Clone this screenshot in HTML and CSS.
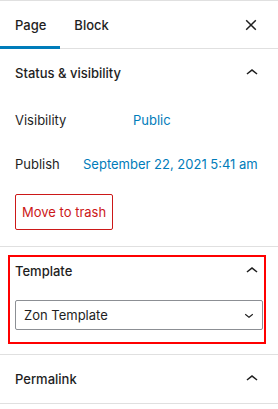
FILE: index.html
```html
<!DOCTYPE html>
<html lang="en">
<head>
    <meta charset="UTF-8">
    <meta name="viewport" content="width=device-width, initial-scale=1.0">
    <title>Page Settings</title>
    <link rel="stylesheet" href="styles.css">
</head>

<body>

<div class="sidebar">
  <div class="tabs">
    <button class="tab is-active">Page</button>
    <button class="tab">Block</button>
    <button class="close" aria-label="Close settings">
      <svg width="12" height="12" viewBox="0 0 12 12"><path d="M1.2 1.2l9.6 9.6M10.8 1.2l-9.6 9.6" stroke="#1e1e1e" stroke-width="1.5" fill="none"/></svg>
    </button>
  </div>

  <div class="panel">
    <button class="panel-toggle">Status &amp; visibility
      <svg class="arrow" width="24" height="24" viewBox="0 0 24 24"><path d="M6.5 12.4L12 8l5.5 4.4-.9 1.2L12 10l-4.6 3.6-.9-1.2z"/></svg>
    </button>
    <div class="panel-body">
      <div class="row row-visibility">
        <span class="label">Visibility</span>
        <span class="value">Public</span>
      </div>
      <div class="row row-publish">
        <span class="label">Publish</span>
        <span class="value">September 22, 2021 5:41 am</span>
      </div>
      <button class="trash">Move to trash</button>
    </div>
  </div>

  <div class="panel panel-template">
    <button class="panel-toggle">Template
      <svg class="arrow" width="24" height="24" viewBox="0 0 24 24"><path d="M6.5 12.4L12 8l5.5 4.4-.9 1.2L12 10l-4.6 3.6-.9-1.2z"/></svg>
    </button>
    <div class="panel-body">
      <div class="select">
        <span>Zon Template</span>
        <svg width="18" height="18" viewBox="0 0 24 24"><path d="M17.5 11.6L12 16l-5.5-4.4.9-1.2L12 14l4.6-3.7.9 1.3z"/></svg>
      </div>
    </div>
    <div class="highlight"></div>
  </div>

  <div class="panel">
    <button class="panel-toggle">Permalink
      <svg class="arrow" width="24" height="24" viewBox="0 0 24 24"><path d="M6.5 12.4L12 8l5.5 4.4-.9 1.2L12 10l-4.6 3.6-.9-1.2z"/></svg>
    </button>
  </div>
</div>

</body>
</html>
```

FILE: styles.css
```css
body {
    font-family: Inter, "Noto Sans", sans-serif;
    font-size: 13px;
    color: #1e1e1e;
    background-color: #fff;
    margin: 0;
    padding: 0;
}

button {
    font-family: inherit;
    font-size: inherit;
    color: inherit;
    background: none;
    border: none;
    padding: 0;
    cursor: pointer;
}

.sidebar {
    border-top: 1px solid #e0e0e0;
}

.tabs {
    display: flex;
    align-items: stretch;
    height: 47px;
    border-bottom: 1px solid #e0e0e0;
}

.tab {
    height: 48px;
    padding: 0 14px;
    font-weight: 500;
}

.tab.is-active {
    padding: 0 14px 0 15px;
    box-shadow: inset 0 -3px 0 0 #007cba;
}

.close {
    margin-left: auto;
    width: 36px;
    margin-right: 9px;
    display: flex;
    align-items: center;
    justify-content: center;
}

.panel {
    border-bottom: 1px solid #e0e0e0;
}

.panel-toggle {
    display: flex;
    align-items: center;
    justify-content: space-between;
    width: 100%;
    height: 48px;
    padding: 0 15px;
    font-weight: 500;
    text-align: left;
}

.arrow {
    fill: #1e1e1e;
    margin-right: -1px;
}

.panel-body {
    padding: 0 15px 16px;
}

.row {
    display: flex;
    align-items: center;
    height: 36px;
}

.row-visibility {
    margin-top: 5px;
}

.row-publish {
    margin-top: 8px;
}

.row-visibility .label {
    width: 118px;
}

.row-publish .label {
    width: 68px;
}

.value {
    color: #007cba;
}

.trash {
    margin-top: 12px;
    height: 36px;
    padding: 0 6px;
    border: 1px solid #cc1818;
    border-radius: 2px;
    color: #cc1818;
}

.panel-template {
    position: relative;
}

.panel-template .panel-body {
    padding-top: 5px;
    padding-bottom: 24px;
}

.select {
    display: flex;
    align-items: center;
    justify-content: space-between;
    height: 28px;
    padding: 0 4px 0 8px;
    border: 1px solid #8c8f94;
    border-radius: 2px;
}

.select svg {
    fill: #1e1e1e;
}

/* red annotation box drawn over the template panel */
.highlight {
    position: absolute;
    top: 8px;
    left: 8px;
    width: 254px;
    height: 85px;
    border: 2px solid #ff0000;
    pointer-events: none;
}
```
